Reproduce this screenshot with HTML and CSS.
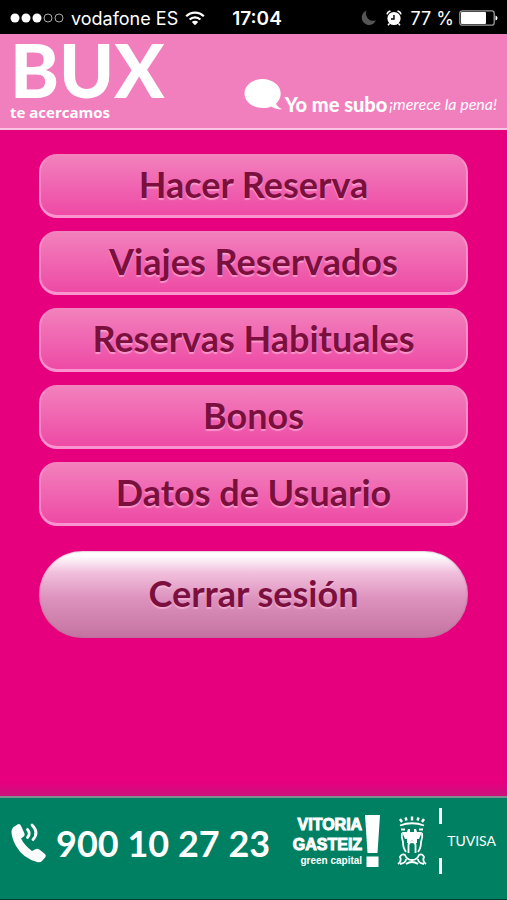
FILE: index.html
```html
<!DOCTYPE html>
<html lang="es">
<head>
    <meta charset="UTF-8">
    <meta name="viewport" content="width=device-width, initial-scale=1.0">
    <title>BUX - te acercamos</title>
    <link rel="stylesheet" href="styles.css">
</head>
<body>
    <div class="status-bar">
        <div class="status-left">
            <svg class="signal" width="54" height="12" viewBox="0 0 54 12" aria-hidden="true">
                <g fill="#fff">
                    <circle cx="5" cy="6" r="4.5"/>
                    <circle cx="16" cy="6" r="4.5"/>
                    <circle cx="27" cy="6" r="4.5"/>
                </g>
                <g fill="none" stroke="#aaa" stroke-width="1">
                    <circle cx="38" cy="6" r="4"/>
                    <circle cx="49" cy="6" r="4"/>
                </g>
            </svg>
            <span>vodafone ES</span>
            <svg width="20" height="16" viewBox="0 0 20 16" aria-hidden="true">
                <g fill="none" stroke="#fff" stroke-width="2.2">
                    <path d="M1.2 6.2a12.4 12.4 0 0 1 17.6 0"/>
                    <path d="M4.6 9.6a7.6 7.6 0 0 1 10.8 0"/>
                </g>
                <path fill="#fff" d="M10 15.2L6.8 12a4.6 4.6 0 0 1 6.4 0z"/>
            </svg>
        </div>
        <time class="clock">17:04</time>
        <div class="status-right">
            <svg class="moon" width="16" height="16" viewBox="0 0 16 16" aria-hidden="true">
                <path fill="#555" d="M5.5.8a7.3 7.3 0 1 0 9.4 9.4A7.2 7.2 0 0 1 5.5.8z"/>
            </svg>
            <svg class="alarm" width="16" height="16" viewBox="0 0 16 16" aria-hidden="true">
                <circle cx="8" cy="8.5" r="6.6" fill="#fff"/>
                <path d="M8 5v4H5" fill="none" stroke="#000" stroke-width="1.4"/>
                <path d="M1 4.3Q1.6 1.6 4.5 1M15 4.3Q14.4 1.6 11.5 1M3.5 13.5L2 15.3M12.5 13.5L14 15.3" fill="none" stroke="#fff" stroke-width="1.5"/>
            </svg>
            <span>77 %</span>
            <svg width="39" height="16" viewBox="0 0 39 16" aria-hidden="true">
                <rect x=".8" y=".8" width="34.4" height="14.4" rx="2.5" fill="none" stroke="#999" stroke-width="1.3"/>
                <rect x="2" y="2" width="25" height="12" rx="1" fill="#fff"/>
                <path d="M36.5 5.5q2 .5 2 2.5t-2 2.5z" fill="#fff"/>
            </svg>
        </div>
    </div>

    <header class="header">
        <div class="brand">
            <h1>BUX</h1>
            <p>te acercamos</p>
        </div>
        <div class="slogan">
            <svg width="39" height="32" viewBox="0 0 39 32" aria-hidden="true">
                <path fill="#fff" d="M18.5 0C8.5 0 .5 6.4.5 14.5S8.5 29 18.5 29c3.500 0 6.300-.5 8.800-1.600 3 2 6.300 3 11.200 2.800-3.300-1.200-5.300-3-6.500-5.500 3-2.700 4.700-6.200 4.700-10.200C36.700 6.400 28.500 0 18.500 0z"/>
            </svg>
            <strong>Yo me subo</strong>
            <em>¡merece la pena!</em>
        </div>
    </header>

    <main class="menu">
        <button type="button" class="btn">Hacer Reserva</button>
        <button type="button" class="btn">Viajes Reservados</button>
        <button type="button" class="btn">Reservas Habituales</button>
        <button type="button" class="btn">Bonos</button>
        <button type="button" class="btn">Datos de Usuario</button>
        <button type="button" class="btn-logout">Cerrar sesión</button>
    </main>

    <footer class="footer">
        <a class="phone" href="tel:900102723">
            <svg width="36" height="40" viewBox="0 0 36 40" aria-hidden="true">
                <path fill="#fff" d="M2.5 4L7 1.2Q9 .5 10 2.7l3.5 7.8q.6 1.8-.8 3L10 15.5q3.500 7 11 12.500l4-2q1.500-.8 3 .2l6 4.800q1.600 1.500.3 3.200l-3 3.500q-1.600 2-4.500 1.500Q12 35.500 5 23 .5 15 .5 8.500q0-2.700 2-4.500z"/>
                <g fill="none" stroke="#fff" stroke-width="2.8" stroke-linecap="round">
                    <path d="M16.5 6.5q3.5 4 0 8"/>
                    <path d="M21 2q7.5 7.5 1 14.5"/>
                </g>
            </svg>
            <span>900 10 27 23</span>
        </a>
        <div class="logos">
            <div class="vitoria">
                <div class="vitoria-text">
                    <b>VITORIA</b>
                    <b>GASTEIZ</b>
                    <small>green capital</small>
                </div>
                <svg width="15" height="52" viewBox="0 0 15 52" aria-hidden="true">
                    <path fill="#fff" d="M0 0h15l-2.500 38h-10zM1.500 41.500h12V52h-12z"/>
                </svg>
            </div>
            <svg class="shield" width="30" height="50" viewBox="0 0 30 50" aria-hidden="true">
                <g fill="none" stroke="#fff" stroke-width="1.8">
                    <path d="M3 9.500Q15 5 27 9.500"/>
                    <path d="M3 3l2 3M8.500 1.500l1 3M15 .5v4M21.500 1.500l-1 3M27 3l-2 3" stroke-width="2.4"/>
                    <path d="M11.500 37v-8q0-3 3.500-3t3.500 3v8"/>
                    <path d="M4 13.500h4M22 13.500h4M5 17q-1 4 1 9 0 6 3 10M25 17q1 4-1 9 0 6-3 10"/>
                    <path d="M1 48q4-3 2-7 2-4 5-2 2 5 7 5t7-5q3-2 5 2-2 4 2 7M3 48q6-1 6-5M27 48q-6-1-6-5M9 48q6-4 12 0"/>
                </g>
                <path fill="#fff" d="M5 16h5l1-3h2v3h4v-3h2l1 3h5l-3 7h-2v4h-2q-3-5-6 0h-2v-4H8z"/>
            </svg>
            <span class="tuvisa">TUVISA</span>
        </div>
    </footer>
</body>
</html>
```
FILE: styles.css
```css
* {
    box-sizing: border-box;
}

body, h1, p {
    margin: 0;
    padding: 0;
}

body {
    display: flex;
    flex-direction: column;
    min-height: 100vh;
    background-color: #e6007e;
    color: #fff;
    font-family: Lato, sans-serif;
}

svg {
    display: block;
    flex-shrink: 0;
}

/* Barra de estado */
.status-bar {
    display: grid;
    grid-template-columns: 1fr auto 1fr;
    align-items: center;
    height: 34px;
    padding: 2px 9px 0 10px;
    background-color: #000;
    font-family: Inter, sans-serif;
    font-size: 18px;
    white-space: nowrap;
}

.status-left, .status-right {
    display: flex;
    align-items: center;
    gap: 7px;
}

.status-right {
    justify-content: flex-end;
    gap: 5px;
}

.alarm {
    margin: 0 4px;
}

.clock {
    padding-left: 6px;
    font-size: 19px;
    font-weight: 600;
}

/* Cabecera */
.header {
    display: flex;
    justify-content: space-between;
    height: 96px;
    padding: 4px 10px 0 10px;
    background-color: #f27fbd;
    border-bottom: 2px solid #fbc3e0;
}

.brand h1 {
    font-size: 74px;
    font-weight: 900;
    line-height: 64px;
}

.brand p {
    font-family: "Open Sans", sans-serif;
    font-size: 15px;
    font-weight: 700;
    line-height: 20px;
}

.slogan {
    display: flex;
    align-items: flex-start;
    padding-top: 41px;
    white-space: nowrap;
}

.slogan strong {
    margin: 13px 2px 0;
    font-size: 20px;
    font-weight: 900;
    line-height: 24px;
}

.slogan em {
    margin-top: 13px;
    font-size: 16px;
    line-height: 24px;
}

/* Menú */
.menu {
    flex: 1;
    display: flex;
    flex-direction: column;
    gap: 13px;
    padding: 24px 39px;
    background: linear-gradient(to bottom, transparent 98%, #c9127c);
}

.btn, .btn-logout {
    width: 100%;
    color: #7b103f;
    font-family: Lato, sans-serif;
    font-size: 36px;
    font-weight: 700;
    line-height: 40px;
    text-shadow: 0 2px 1px rgba(255, 190, 225, 0.6);
    cursor: pointer;
}

.btn {
    height: 64px;
    padding: 0 0 4px;
    border: 2px solid #f78fc8;
    border-top-color: #f283bd;
    border-bottom: 3px solid #fa94ce;
    border-radius: 18px;
    background: linear-gradient(to bottom, #f280bc, #ee4aa5);
}

.btn-logout {
    height: 87px;
    margin-top: 12px;
    padding: 0 0 4px;
    border: none;
    border-radius: 44px;
    background: linear-gradient(to bottom, #fff 5%, #f1bfdc 25%, #dd91bd 55%, #c473a1);
    box-shadow: inset 0 0 2px #b3648f;
}

.btn:active, .btn-logout:active {
    filter: brightness(0.9);
}

/* Pie */
.footer {
    display: flex;
    justify-content: space-between;
    align-items: flex-start;
    height: 104px;
    padding: 10px 11px 0 11px;
    background-color: #008063;
    border-top: 2px solid #7f8f91;
    border-bottom: 1px solid #003c30;
}

.phone {
    display: flex;
    align-items: center;
    gap: 9px;
    height: 70px;
    color: #fff;
    font-size: 36px;
    font-weight: 700;
    text-decoration: none;
    white-space: nowrap;
}

.logos {
    display: flex;
    align-items: center;
    height: 66px;
}

.vitoria {
    display: flex;
    gap: 3px;
    margin-right: 17px;
}

.vitoria-text {
    display: flex;
    flex-direction: column;
    align-items: flex-end;
    font-family: "Liberation Sans", sans-serif;
    font-weight: 700;
}

.vitoria-text b {
    font-size: 16px;
    line-height: 20px;
    -webkit-text-stroke: 1px #fff;
}

.vitoria-text small {
    font-size: 10px;
    line-height: 12px;
}

.shield {
    margin-right: 12px;
}

.tuvisa {
    position: relative;
    padding: 24px 0 24px 8px;
    font-size: 14px;
    line-height: 18px;
}

.tuvisa::before, .tuvisa::after {
    content: "";
    position: absolute;
    left: 0;
    width: 3px;
    height: 16px;
    background-color: #fff;
}

.tuvisa::before {
    top: 0;
}

.tuvisa::after {
    bottom: 0;
}
```
